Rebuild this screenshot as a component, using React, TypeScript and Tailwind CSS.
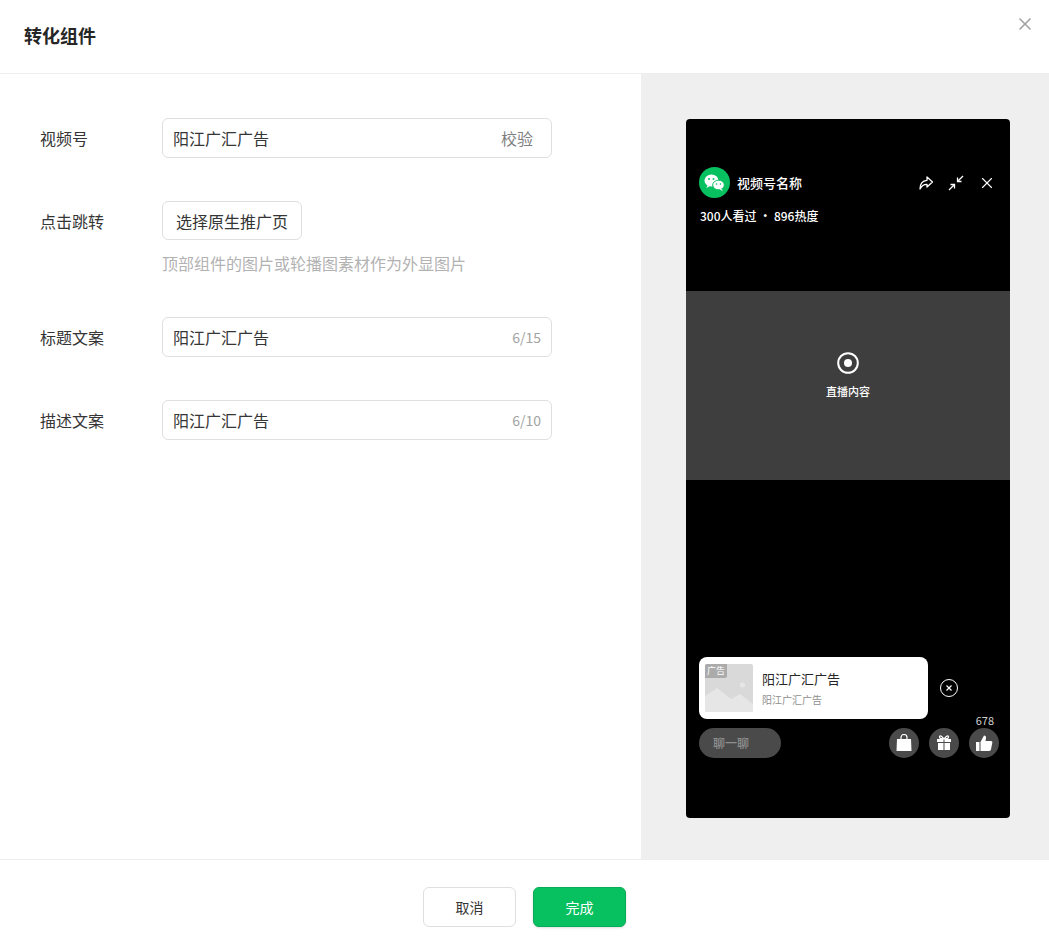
import { X } from "lucide-react";

const font = { fontFamily: '"Noto Sans CJK SC", "Noto Sans", sans-serif' };

const Field = ({ label, value, right, count }: { label: string; value: string; right?: string; count?: string }) => (
  <div className="flex items-center">
    <div className="w-[122px] text-[16px] text-[#353535]">{label}</div>
    <div className="flex h-10 w-[390px] items-center justify-between rounded-md border border-[#dfdfdf] pl-[10px] pr-[10px]">
      <span className="text-[16px] text-[#353535]">{value}</span>
      {right && <span className="pr-2 text-[16px] text-[#7f7f7f]">{right}</span>}
      {count && <span className="text-[14px] text-[#a3a3a3]">{count}</span>}
    </div>
  </div>
);

const WeChatLogo = () => (
  <svg viewBox="0 0 31 31" className="h-[31px] w-[31px]">
    <circle cx="15.5" cy="15.5" r="15.5" fill="#07c160" />
    <ellipse cx="12.5" cy="13.5" rx="7" ry="6" fill="#fff" />
    <path d="M8.5 18l-1 3 3.5-2z" fill="#fff" />
    <ellipse cx="19.5" cy="18" rx="5.8" ry="4.8" fill="#fff" stroke="#07c160" strokeWidth="1" />
    <path d="M22.5 22l1.5 2-3.5-1.500z" fill="#fff" />
    <circle cx="10" cy="12" r="1" fill="#07c160" />
    <circle cx="14.500" cy="12" r="1" fill="#07c160" />
    <circle cx="17.500" cy="17" r="0.800" fill="#07c160" />
    <circle cx="21.500" cy="17" r="0.800" fill="#07c160" />
  </svg>
);

const ShareIcon = () => (
  <svg viewBox="0 0 16 16" className="h-4 w-4" fill="none" stroke="#fff" strokeWidth="1.300" strokeLinejoin="round">
    <path d="M9 2l5.500 5L9 12V9.300C6 9.200 3.700 10.500 2 14c0-5 2.500-8.300 7-8.700z" />
  </svg>
);

const ShrinkIcon = () => (
  <svg viewBox="0 0 16 16" className="h-4 w-4" fill="none" stroke="#fff" strokeWidth="1.300">
    <path d="M15 1L9.500 6.500M9.500 2.500v4h4M1 15l5.500-5.500M2.500 9.500h4v4" />
  </svg>
);

const RoundButton = ({ children }: { children: React.ReactNode }) => (
  <div className="flex h-[30px] w-[30px] items-center justify-center rounded-full bg-[#4a4a4a]">{children}</div>
);

export default function App() {
  return (
    <div className="relative flex h-[952px] w-[1049px] flex-col overflow-hidden bg-white" style={font}>
      {/* Header */}
      <div className="flex h-[74px] shrink-0 items-center border-b border-[#ededed] pl-6 pb-[2px]">
        <h1 className="text-[18px] font-bold text-[#262626]">转化组件</h1>
      </div>
      <button className="absolute right-[14px] top-[14px] text-[#a3a3a3]">
        <X className="h-[20px] w-[20px]" strokeWidth={2} />
      </button>

      {/* Body */}
      <div className="flex min-h-0 flex-1">
        <div className="w-[641px] shrink-0 pl-10 pt-[44px]">
          <Field label="视频号" value="阳江广汇广告" right="校验" />
          <div className="mt-[43px] flex">
            <div className="w-[122px] pt-[8px] text-[16px] text-[#353535]">点击跳转</div>
            <div>
              <button className="flex h-[39px] w-[140px] items-center justify-center rounded-md border border-[#dfdfdf] text-[16px] text-[#353535]">
                选择原生推广页
              </button>
              <p className="mt-[11px] text-[16px] leading-[24px] text-[#b2b2b2]">顶部组件的图片或轮播图素材作为外显图片</p>
            </div>
          </div>
          <div className="mt-[42px]">
            <Field label="标题文案" value="阳江广汇广告" count="6/15" />
          </div>
          <div className="mt-[43px]">
            <Field label="描述文案" value="阳江广汇广告" count="6/10" />
          </div>
        </div>

        <div className="flex-1 bg-[#efefef] pl-[45px] pt-[45px]">
          {/* Phone preview */}
          <div className="flex h-[699px] w-[324px] flex-col rounded-[4px] bg-black pt-[48px] text-white">
            <div className="flex h-[31px] items-center pl-[13px] pr-[14px]">
              <WeChatLogo />
              <span className="ml-[7px] text-[13px] font-medium">视频号名称</span>
              <div className="ml-auto flex items-center gap-[14px]">
                <ShareIcon />
                <ShrinkIcon />
                <X className="h-[18px] w-[18px]" strokeWidth={1.5} />
              </div>
            </div>
            <div className="ml-[14px] mt-[9px] h-[18px] text-[12px] font-medium leading-[18px]">300人看过 · 896热度</div>
            <div className="mt-[66px] flex h-[189px] flex-col items-center bg-[#3e3e3e] pt-[61px]">
              <svg viewBox="0 0 22 22" className="h-[22px] w-[22px]">
                <circle cx="11" cy="11" r="9.800" fill="none" stroke="#fff" strokeWidth="2" />
                <circle cx="11" cy="11" r="4" fill="#fff" />
              </svg>
              <span className="mt-[9px] text-[11px] font-medium leading-[16px]">直播内容</span>
            </div>

            {/* Ad card */}
            <div className="mt-[177px] flex pl-[13px]">
              <div className="flex h-[62px] w-[229px] items-center rounded-[8px] bg-white pl-[6px]">
                <div className="relative h-[48px] w-[48px] overflow-hidden rounded-[2px] bg-[#d9d9d9]">
                  <svg viewBox="0 0 48 48" className="h-full w-full">
                    <circle cx="37.500" cy="21" r="2.500" fill="#e6e6e6" />
                    <path d="M0 32l12-8 14 11 9-5 13 10v8H0z" fill="#e6e6e6" />
                  </svg>
                  <span className="absolute left-0 top-0 rounded-br-[2px] bg-[#ababab] px-[2px] text-[9px] leading-[14px] text-white">广告</span>
                </div>
                <div className="ml-[9px]">
                  <div className="text-[13px] leading-[18px] text-[#262626]">阳江广汇广告</div>
                  <div className="mt-[5px] text-[10px] leading-[14px] text-[#8f8f8f]">阳江广汇广告</div>
                </div>
              </div>
              <svg viewBox="0 0 18 18" className="ml-[12px] mt-[22px] h-[18px] w-[18px]" fill="none" stroke="#fff">
                <circle cx="9" cy="9" r="8.500" />
                <path d="M6.500 6.500l5 5M11.500 6.500l-5 5" strokeWidth="1.200" />
              </svg>
            </div>
            <div className="mt-[-6px] h-[15px] pr-[16px] text-right text-[11px] leading-[15px] text-[#cfcfcf]">678</div>

            {/* Bottom actions */}
            <div className="mt-[0px] flex items-center pl-[13px] pr-[11px]">
              <div className="flex h-[30px] w-[82px] items-center rounded-full bg-[#4a4a4a] pl-[14px] text-[12px] font-medium text-[#8e8e8e]">聊一聊</div>
              <div className="ml-auto flex gap-[10px]">
                <RoundButton>
                  <svg viewBox="0 0 16 18" className="h-[18px] w-[16px]">
                    <path d="M1 5h14l.500 12H.500z" fill="#fff" />
                    <path d="M5 7V3.500a3 3 0 016 0V7" fill="none" stroke="#fff" strokeWidth="1.200" />
                  </svg>
                </RoundButton>
                <RoundButton>
                  <svg viewBox="0 0 16 16" className="h-[16px] w-[16px]">
                    <path d="M1 4h6.500v3H1zM8.500 4H15v3H8.500zM2 8h5.500v7H2zM8.500 8H14v7H8.500z" fill="#fff" />
                    <path d="M8 4C6 1 3.500 0 3.500 2S6 4 8 4zM8 4c2-3 4.500-4 4.500-2S10 4 8 4z" fill="none" stroke="#fff" strokeWidth="1.200" />
                  </svg>
                </RoundButton>
                <RoundButton>
                  <svg viewBox="0 0 18 18" className="h-[18px] w-[18px]">
                    <path d="M1 8h3.500v9H1z" fill="#fff" />
                    <path d="M5.500 8L9 1.500c1.500 0 2.300 1 2 2.500l-.500 3H16c1 0 1.500.800 1.300 1.800l-1.300 6.500c-.200 1-.800 1.700-1.800 1.700H5.500z" fill="#fff" />
                  </svg>
                </RoundButton>
              </div>
            </div>
          </div>
        </div>
      </div>

      {/* Footer */}
      <div className="flex h-[93px] shrink-0 justify-center gap-[17px] border-t border-[#ededed] pt-[27px]">
        <button className="h-10 w-[93px] rounded-md border border-[#dfdfdf] bg-white text-[14px] text-[#353535]">取消</button>
        <button className="h-10 w-[93px] rounded-md border border-[#06ad56] bg-[#07c160] text-[14px] text-white shadow-sm">完成</button>
      </div>
    </div>
  );
}
